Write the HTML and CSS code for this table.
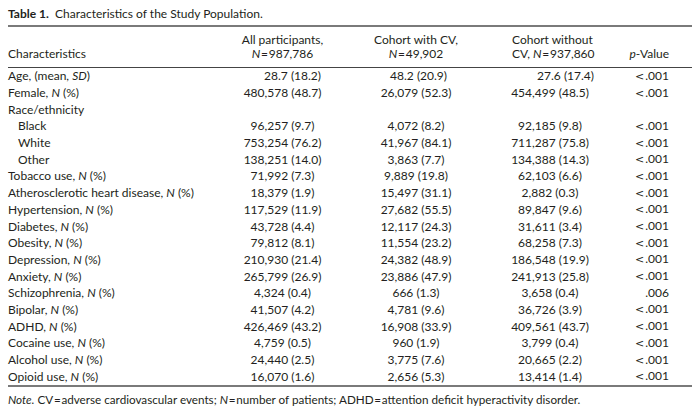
FILE: index.html
```html
<!DOCTYPE html>
<html>
<head>
<meta charset="utf-8">
<link rel="stylesheet" href="styles.css">
</head>
<body>
<div class="page">
  <div class="title"><b>Table 1.</b>&nbsp; Characteristics of the Study Population.</div>
  <table class="tbl">
    <colgroup>
      <col class="c0"><col class="c1"><col class="c2"><col class="c3"><col class="c4">
    </colgroup>
    <thead>
      <tr>
        <th class="lab">Characteristics</th>
        <th class="mid">All participants,<br><i>N</i>&#8202;=&#8202;987,786</th>
        <th class="mid">Cohort with CV,<br><i>N</i>&#8202;=&#8202;49,902</th>
        <th class="left3">Cohort without<br>CV, <i>N</i>&#8202;=&#8202;937,860</th>
        <th class="pv"><i>p</i>-Value</th>
      </tr>
    </thead>
    <tbody>
      <tr class="age"><td>Age, (mean, <i>SD</i>)</td><td>28.7 (18.2)</td><td>48.2 (20.9)</td><td>27.6 (17.4)</td><td><span class="lt">&lt;</span>.001</td></tr>
      <tr><td>Female, <i>N</i> (%)</td><td>480,578 (48.7)</td><td>26,079 (52.3)</td><td>454,499 (48.5)</td><td><span class="lt">&lt;</span>.001</td></tr>
      <tr><td>Race/ethnicity</td><td></td><td></td><td></td><td></td></tr>
      <tr><td class="ind">Black</td><td>96,257 (9.7)</td><td>4,072 (8.2)</td><td>92,185 (9.8)</td><td><span class="lt">&lt;</span>.001</td></tr>
      <tr><td class="ind">White</td><td>753,254 (76.2)</td><td>41,967 (84.1)</td><td>711,287 (75.8)</td><td><span class="lt">&lt;</span>.001</td></tr>
      <tr><td class="ind">Other</td><td>138,251 (14.0)</td><td>3,863 (7.7)</td><td>134,388 (14.3)</td><td><span class="lt">&lt;</span>.001</td></tr>
      <tr><td>Tobacco use, <i>N</i> (%)</td><td>71,992 (7.3)</td><td>9,889 (19.8)</td><td>62,103 (6.6)</td><td><span class="lt">&lt;</span>.001</td></tr>
      <tr><td>Atherosclerotic heart disease, <i>N</i> (%)</td><td>18,379 (1.9)</td><td>15,497 (31.1)</td><td>2,882 (0.3)</td><td><span class="lt">&lt;</span>.001</td></tr>
      <tr><td>Hypertension, <i>N</i> (%)</td><td>117,529 (11.9)</td><td>27,682 (55.5)</td><td>89,847 (9.6)</td><td><span class="lt">&lt;</span>.001</td></tr>
      <tr><td>Diabetes, <i>N</i> (%)</td><td>43,728 (4.4)</td><td>12,117 (24.3)</td><td>31,611 (3.4)</td><td><span class="lt">&lt;</span>.001</td></tr>
      <tr><td>Obesity, <i>N</i> (%)</td><td>79,812 (8.1)</td><td>11,554 (23.2)</td><td>68,258 (7.3)</td><td><span class="lt">&lt;</span>.001</td></tr>
      <tr><td>Depression, <i>N</i> (%)</td><td>210,930 (21.4)</td><td>24,382 (48.9)</td><td>186,548 (19.9)</td><td><span class="lt">&lt;</span>.001</td></tr>
      <tr><td>Anxiety, <i>N</i> (%)</td><td>265,799 (26.9)</td><td>23,886 (47.9)</td><td>241,913 (25.8)</td><td><span class="lt">&lt;</span>.001</td></tr>
      <tr><td>Schizophrenia, <i>N</i> (%)</td><td>4,324 (0.4)</td><td>666 (1.3)</td><td>3,658 (0.4)</td><td>.006</td></tr>
      <tr><td>Bipolar, <i>N</i> (%)</td><td>41,507 (4.2)</td><td>4,781 (9.6)</td><td>36,726 (3.9)</td><td><span class="lt">&lt;</span>.001</td></tr>
      <tr><td>ADHD, <i>N</i> (%)</td><td>426,469 (43.2)</td><td>16,908 (33.9)</td><td>409,561 (43.7)</td><td><span class="lt">&lt;</span>.001</td></tr>
      <tr><td>Cocaine use, <i>N</i> (%)</td><td>4,759 (0.5)</td><td>960 (1.9)</td><td>3,799 (0.4)</td><td><span class="lt">&lt;</span>.001</td></tr>
      <tr><td>Alcohol use, <i>N</i> (%)</td><td>24,440 (2.5)</td><td>3,775 (7.6)</td><td>20,665 (2.2)</td><td><span class="lt">&lt;</span>.001</td></tr>
      <tr><td>Opioid use, <i>N</i> (%)</td><td>16,070 (1.6)</td><td>2,656 (5.3)</td><td>13,414 (1.4)</td><td><span class="lt">&lt;</span>.001</td></tr>
    </tbody>
  </table>
  <p class="note"><i>Note.</i> CV&#8202;=&#8202;adverse cardiovascular events; <i>N</i>&#8202;=&#8202;number of patients; ADHD&#8202;=&#8202;attention deficit hyperactivity disorder.</p>
</div>
</body>
</html>
```

FILE: styles.css
```css
html, body {
  margin: 0;
  background: #ffffff;
}
.page {
  padding: 6px 8px 0 8px;
  font-family: Lato, "Open Sans", sans-serif;
  color: #231f20;
}
.title {
  font-size: 12px;
  line-height: 16px;
  height: 19px;
}
.title b {
  font-weight: 700;
}
.tbl {
  width: 684px;
  border-collapse: collapse;
  table-layout: fixed;
  font-size: 12px;
  border-top: 2px solid #7a7a7a;
  border-bottom: 2px solid #7a7a7a;
}
.c0 { width: 217px; }
.c1 { width: 115px; }
.c2 { width: 152px; }
.c3 { width: 116px; }
.c4 { width: 84px; }
.tbl th {
  font-weight: 400;
  line-height: 14px;
  padding: 6px 0 6px 0;
  vertical-align: bottom;
  border-bottom: 1px solid #444;
  white-space: nowrap;
}
.tbl th.lab { text-align: left; }
.tbl th.mid { text-align: center; }
.tbl th.left3 { text-align: left; padding-left: 20px; }
.tbl th.pv { text-align: right; padding-right: 23px; }
.tbl td {
  height: 16.7px;
  padding: 0;
  line-height: 14px;
  text-align: center;
  white-space: nowrap;
}
.tbl td:first-child { text-align: left; }
.tbl td:last-child { text-align: right; padding-right: 23px; }
.tbl td.ind { padding-left: 10px; }
.tbl tr.age td:nth-child(2) { text-align: right; padding-right: 19px; }
.tbl tr.age td:nth-child(3) { text-align: right; padding-right: 45px; }
.tbl tr.age td:nth-child(4) { text-align: right; padding-right: 14px; }
.lt {
  font-family: "DejaVu Sans", sans-serif;
  font-size: 11px;
  margin-right: 1px;
}
.note {
  margin: 5px 0 0 0;
  font-size: 11.7px;
  line-height: 14px;
}
```
